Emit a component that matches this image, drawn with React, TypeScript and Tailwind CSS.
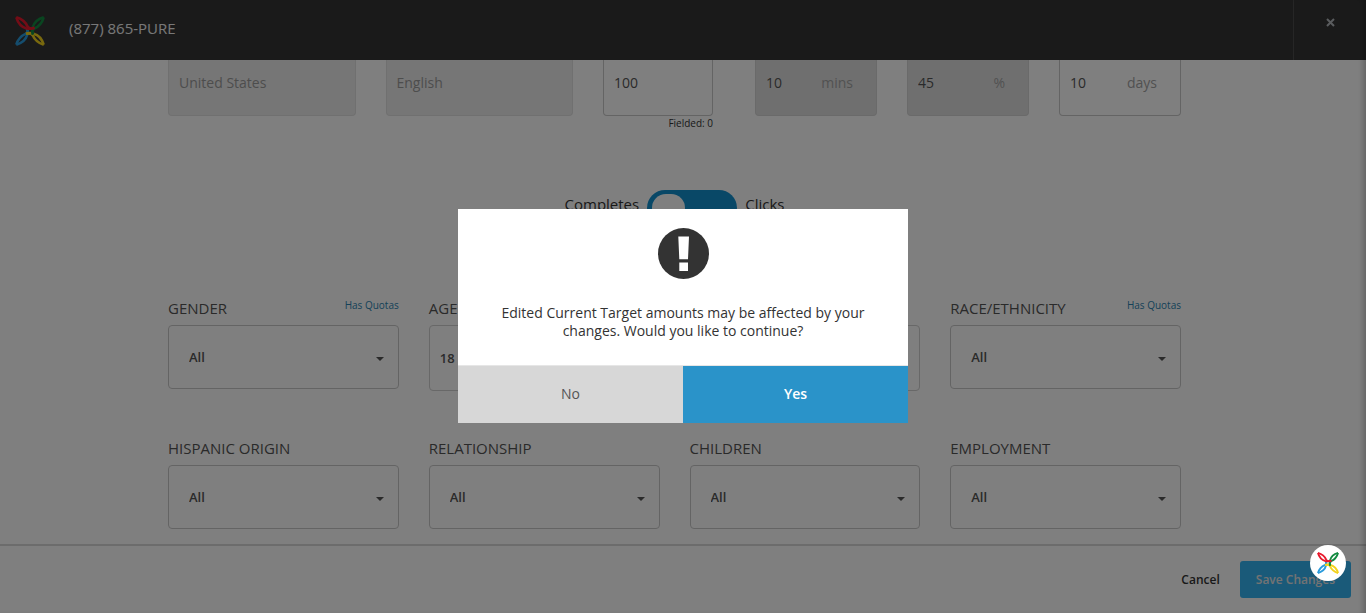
import React, { useId } from "react";

function PetalLogo({ className }: { className: string }) {
  return (
    <svg viewBox="0 0 30 30" className={className} fill="none" strokeWidth="2.600" strokeLinejoin="round" aria-hidden="true">
      <path d="M1.300 28.700C2.800 23.500 6 19.800 11 17.600C13 16.600 13 14.500 12.300 12.500" stroke="#2a9bdc" />
      <path d="M1.300 28.700C6.500 27.200 11 23.500 12.300 18.500C12.800 16 12.800 14.500 12 12.500" stroke="#2a9bdc" />
      <path d="M28.700 28.700C27.200 23.500 23.500 19 18.500 17.700C16 17 13.500 16.900 11 17.800" stroke="#f3d21c" />
      <path d="M28.700 28.700C23.500 27.200 19.800 24 17.600 19.300C16.500 17.300 14.500 17 11 17.800" stroke="#f3d21c" />
      <path d="M28.700 1.300C23.500 2.800 19 6.500 17.700 11.500C17 14 17 16 18 18.500" stroke="#128b40" />
      <path d="M28.700 1.300C27.200 6.500 24 10.500 19.300 12.500C17 13.800 17 16 18 18.500" stroke="#128b40" />
      <path d="M1.300 1.300C2.800 6.500 6.500 11 11.500 12.400C14 13 16.500 13 19.500 11.800" stroke="#e8192c" />
      <path d="M1.300 1.300C6.500 2.800 10.500 6 12.500 10.500C13.800 12.700 16 13 19.500 11.800" stroke="#e8192c" />
    </svg>
  );
}

function DisabledBox({ label, value }: { label: string; value: string }) {
  return (
    <input
      aria-label={label}
      value={value}
      disabled
      className="h-14 w-full min-w-0 rounded-b border border-t-0 border-[#e0e0e0] bg-[#ececec] px-[10px] pb-2.5 text-sm text-[#9b9b9b]"
    />
  );
}

function UnitBox({ label, value, unit, locked }: { label: string; value: string; unit: string; locked?: boolean }) {
  return (
    <label
      className={
        locked
          ? "flex h-14 items-center rounded-b border border-t-0 border-[#d4d4d4] bg-[#dfdfdf] pr-[23px] pb-2.5 pl-[10px] text-sm"
          : "flex h-14 items-center rounded-b border border-t-0 border-[#c9c9c9] bg-white pr-[23px] pb-2.5 pl-[10px] text-sm"
      }
    >
      <input aria-label={label} defaultValue={value} disabled={locked} className="w-full min-w-0 text-[#555]" />
      <span className="text-[#a3a3a3]">{unit}</span>
    </label>
  );
}

function SelectField({ label, quotas }: { label: string; quotas?: boolean }) {
  const id = useId();
  return (
    <div>
      <div className="flex h-[26px] justify-between">
        <label htmlFor={id} className="text-[15px] leading-[18px] text-[#555]">{label}</label>
        {quotas && <span className="text-[10px] leading-3 text-[#2b83b0]">Has Quotas</span>}
      </div>
      <div className="relative">
        <select id={id} className="h-16 w-full appearance-none rounded border border-[#c9c9c9] bg-white px-5 pt-0.5 text-[13px] font-semibold text-[#555]">
          <option>All</option>
        </select>
        <svg viewBox="0 0 8 4" className="pointer-events-none absolute top-8 right-[15px] h-1 w-2" aria-hidden="true">
          <path d="M0 0H8L4 4Z" fill="#555" />
        </svg>
      </div>
    </div>
  );
}

export default function App() {
  return (
    <div className="flex h-screen flex-col overflow-hidden bg-white font-['Open_Sans','Noto_Sans',sans-serif] text-[#333]">
      <header className="flex h-[60px] shrink-0 items-center bg-[#353535]">
        <PetalLogo className="mt-0.5 ml-[15px] size-[30px]" />
        <span className="ml-6 pb-1 text-[15px] text-[#f0f0f0]">(877) 865-PURE</span>
        <button aria-label="Close" className="ml-auto flex h-full w-[73px] justify-center border-l border-[#4c4c4c] pt-[18px]">
          <svg viewBox="0 0 9 9" className="size-[9px]">
            <path d="M1 1L8 8M8 1L1 8" stroke="#b4b9bd" strokeWidth="2" />
          </svg>
        </button>
      </header>

      <main className="min-h-0 flex-1 overflow-hidden pr-[185px] pl-[168px]">
        <div className="grid grid-cols-[1fr_1fr_122px_122px_122px_122px] gap-x-[30px]">
          <DisabledBox label="Country" value="United States" />
          <DisabledBox label="Language" value="English" />
          <div className="pr-3">
            <input aria-label="Completes needed" defaultValue="100" className="h-14 w-full rounded-b border border-t-0 border-[#c9c9c9] px-[10px] pb-2.5 text-sm text-[#555]" />
            <p className="text-right text-[10px] leading-[14px]">Fielded: 0</p>
          </div>
          <UnitBox label="Length" value="10" unit="mins" locked />
          <UnitBox label="Incidence" value="45" unit="%" locked />
          <UnitBox label="Field time" value="10" unit="days" />
        </div>

        <div className="mt-[60px] flex items-start justify-center gap-2 text-[15px] leading-7">
          <span>Completes</span>
          <label className="flex h-9 w-[90px] rounded-[18px] bg-[#1390cf] p-1">
            <input type="checkbox" aria-label="Switch to clicks" className="peer sr-only" />
            <span className="ml-px h-7 w-[33px] rounded-[14px] bg-white peer-checked:ml-auto" />
          </label>
          <span>Clicks</span>
        </div>

        <div className="mt-[73px] grid grid-cols-4 gap-x-[30px] gap-y-12">
          <SelectField label="GENDER" quotas />
          <div className="col-span-2">
            <label htmlFor="age" className="block h-[26px] text-[15px] leading-[18px] text-[#555]">AGE</label>
            <input id="age" defaultValue="18" className="h-[66px] w-full rounded border border-[#d0d0d0] px-[10px] text-[13px] font-semibold text-[#555]" />
          </div>
          <SelectField label="RACE/ETHNICITY" quotas />
          <SelectField label="HISPANIC ORIGIN" />
          <SelectField label="RELATIONSHIP" />
          <SelectField label="CHILDREN" />
          <SelectField label="EMPLOYMENT" />
        </div>
      </main>

      <footer className="flex h-[69px] shrink-0 items-center justify-end gap-5 border-t-2 border-[#d8d8d8] pr-[15px] text-xs font-semibold">
        <button>Cancel</button>
        <button className="h-[37px] rounded-[3px] bg-[#34b4f3] px-4 text-[#e6e6e6]">Save Changes</button>
      </footer>

      <div className="fixed inset-0 flex items-center justify-center bg-black/50 pt-[19px] shadow-[inset_-6px_0_6px_-4px_rgba(0,0,0,0.25)]">
        <div role="alertdialog" aria-describedby="confirm-text" className="w-[450px] bg-white">
          <svg viewBox="0 0 51 51" className="mx-auto mt-[19px] size-[51px]" aria-hidden="true">
            <circle cx="25.500" cy="25.500" r="25.500" fill="#333" />
            <path d="M20.300 8.500H31L30 31.300H21.300ZM21.300 34.500H30V43H21.300Z" fill="#fff" />
          </svg>
          <p id="confirm-text" className="mt-[25px] px-10 text-center text-sm leading-[18px]">
            Edited Current Target amounts may be affected by your changes. Would you like to continue?
          </p>
          <div className="mt-[25px] flex h-[58px] border-t border-[#e6e6e6] text-sm">
            <button className="flex-1 bg-[#d7d7d7] pb-0.5 text-[#555]">No</button>
            <button className="flex-1 bg-[#2a93c9] pb-0.5 font-semibold text-white">Yes</button>
          </div>
        </div>
      </div>

      <button aria-label="Help" className="fixed right-5 bottom-8 flex size-9 items-center justify-center rounded-full bg-white">
        <PetalLogo className="size-[22px]" />
      </button>
    </div>
  );
}
